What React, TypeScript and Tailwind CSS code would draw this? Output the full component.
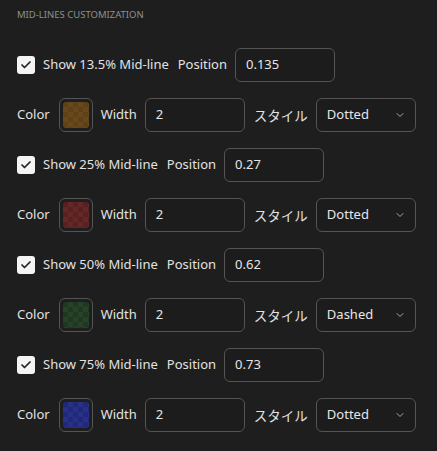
import { ChevronDown, Check } from "lucide-react";

type MidLine = {
  label: string;
  position: string;
  width: string;
  style: string;
  swatch: string;
};

const midLines: MidLine[] = [
  { label: "Show 13.5% Mid-line", position: "0.135", width: "2", style: "Dotted", swatch: "bg-[#5f4115]" },
  { label: "Show 25% Mid-line", position: "0.27", width: "2", style: "Dotted", swatch: "bg-[#5a1f1f]" },
  { label: "Show 50% Mid-line", position: "0.62", width: "2", style: "Dashed", swatch: "bg-[#1f3820]" },
  { label: "Show 75% Mid-line", position: "0.73", width: "2", style: "Dotted", swatch: "bg-[#1f287c]" },
];

const field =
  "h-[34px] w-[100px] rounded-md border border-[#545454] bg-[#1c1c1c] px-[10px] flex items-center text-[13px] text-[#e6e6e6]";

function MidLineBlock({ line }: { line: MidLine }) {
  return (
    <>
      <div className="flex items-center h-[34px]">
        <span className="flex h-[18px] w-[18px] items-center justify-center rounded-[3px] bg-[#f4f4f4]">
          <Check className="h-3 w-3 text-[#222]" strokeWidth={3.5} />
        </span>
        <span className="ml-2">{line.label}</span>
        <span className="ml-[9px]">Position</span>
        <div className={`${field} ml-[8px]`}>{line.position}</div>
      </div>
      <div className="flex items-center h-[34px]">
        <span>Color</span>
        <div className="ml-[9px] flex h-[34px] w-[34px] items-center justify-center rounded-md border border-[#545454]">
          <div className={`h-[26px] w-[26px] rounded-[3px] ${line.swatch}`}>
            <div className="h-full w-full rounded-[3px] bg-[repeating-conic-gradient(#ffffff0b_0_25%,#00000000_0_50%)] bg-[length:10px_10px]" />
          </div>
        </div>
        <span className="ml-2">Width</span>
        <div className={`${field} ml-2`}>{line.width}</div>
        <span className="ml-[9px] text-[13.5px] font-['Noto_Sans_CJK_JP',sans-serif]">スタイル</span>
        <div className={`${field} ml-[8px] justify-between pr-[9px]`}>
          <span>{line.style}</span>
          <ChevronDown className="h-3 w-3 text-[#a8a8a8]" strokeWidth={2} />
        </div>
      </div>
    </>
  );
}

export default function App() {
  return (
    <div className="min-h-[451px] w-[437px] bg-[#1e1e1e] px-[17px] pt-[9px] font-['Noto_Sans','Noto_Sans_CJK_JP',sans-serif] text-[13px] text-[#e2e2e2]">
      <div className="text-[9.5px] uppercase tracking-normal text-[#8f8f8f] leading-[12px]">Mid-lines customization</div>
      <div className="mt-[27px] flex flex-col gap-4">
        {midLines.map((line) => (
          <MidLineBlock key={line.label} line={line} />
        ))}
      </div>
    </div>
  );
}
